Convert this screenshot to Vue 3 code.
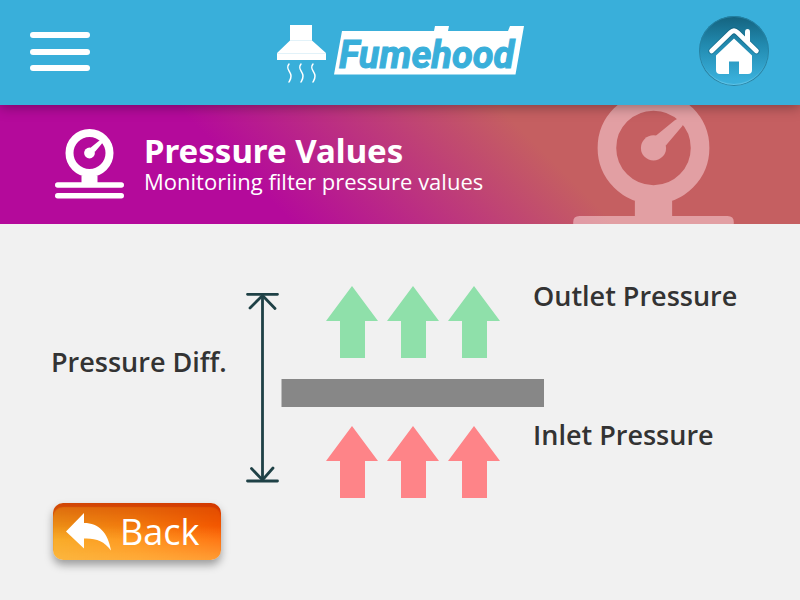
<script setup>
const columns = [107, 168, 229]
const arrow = 'M0 0 L26 35 H13 V72 H-12 V35 H-26 Z'
</script>

<template>
  <div class="app">
    <svg class="defs" width="0" height="0" aria-hidden="true">
      <symbol id="gauge" viewBox="0 0 69 70">
        <circle cx="34.5" cy="24" r="20" fill="none" stroke="currentColor" stroke-width="8" />
        <circle cx="34.5" cy="24" r="5.4" fill="currentColor" />
        <path d="M35.5 18.8 L43.5 12.2 Q45.2 10.9 46.6 12 Q48 13.1 46.8 14.7 L39.8 23 Z" fill="currentColor" />
        <path d="M26.5 46.5 H42.5 V53.3 H66.3 Q69 53.3 69 56 Q69 58.7 66.3 58.7 H2.7 Q0 58.7 0 56 Q0 53.3 2.7 53.3 H26.5 Z" fill="currentColor" />
        <rect y="64" width="69" height="5.4" rx="2.7" fill="currentColor" />
      </symbol>
    </svg>

    <header class="topbar">
      <button class="menu" type="button" aria-label="Menu">
        <span></span><span></span><span></span>
      </button>

      <svg class="logo" viewBox="0 0 248 64" role="img" aria-label="Fumehood">
        <path d="M15 5 H36 V20.5 L50 33 V40 H1 V33 L14 20.5 V5 Z" fill="#fff" />
        <path d="M14 20.5 H36 M1 33.5 H50" stroke="#d5edf7" stroke-width=".7" />
        <g fill="none" stroke="#fff" stroke-width="1.5" stroke-linecap="round">
          <path d="M13 44 C9 49 15 51 15 56 C15 59 14 60 13 62" />
          <path d="M25 44 C21 49 27 51 27 56 C27 59 26 60 25 62" />
          <path d="M37 44 C33 49 39 51 39 56 C39 59 38 60 37 62" />
        </g>
        <path d="M66 11 H158 L159 6 H173 L172 11 H232 L234 6 H248 L239.5 54.5 H58 Z" fill="#fff" />
        <text x="63" y="48" class="wordmark">Fumehood</text>
      </svg>

      <button class="home" type="button" aria-label="Home">
        <svg viewBox="0 0 70 70" aria-hidden="true">
          <path d="M12.5 35 L31.5 16.5 Q35 13 38.5 16.5 L57.5 35" fill="none" stroke="#083f55" stroke-opacity=".3" stroke-width="6.5" stroke-linecap="round" />
          <path d="M46 16 Q46 13 48.5 13 Q51 13 51 16 V27 L46 22 Z" fill="#fff" />
          <path d="M12.5 35 L31.5 16.5 Q35 13 38.5 16.5 L57.5 35" fill="none" stroke="#fff" stroke-width="4.6" stroke-linecap="round" stroke-linejoin="round" />
          <path d="M35 22.5 L53 39.5 V54 Q53 58 49 58 H40 V45.5 H30 V58 H21 Q17 58 17 54 V39.5 Z" fill="#fff" />
        </svg>
      </button>
    </header>

    <section class="banner">
      <svg class="gauge" aria-hidden="true"><use href="#gauge" /></svg>
      <div class="heading">
        <h1>Pressure Values</h1>
        <p>Monitoriing filter pressure values</p>
      </div>
      <svg class="watermark" aria-hidden="true"><use href="#gauge" /></svg>
    </section>

    <main>
      <div class="readings">
        <p class="diff">Pressure Diff.</p>
        <svg class="diagram" viewBox="0 0 288 215" aria-hidden="true">
          <g fill="none" stroke="#1f4146" stroke-width="2.8" stroke-linecap="round">
            <path d="M2.5 9.3 H32.5 M2.5 196 H32.5 M17.5 10 V195" />
            <path d="M5 23 L17.5 10.5 L30 23.5 M6.5 183.5 L17.5 195 L28 183" />
          </g>
          <path v-for="x in columns" :key="'out' + x" :d="arrow" :transform="`translate(${x} 1)`" fill="#8fe0aa" />
          <rect x="36.5" y="94" width="262.5" height="28" fill="#878787" />
          <path v-for="x in columns" :key="'in' + x" :d="arrow" :transform="`translate(${x} 141)`" fill="#fe8488" />
        </svg>
        <div class="sides">
          <p>Outlet Pressure</p>
          <p>Inlet Pressure</p>
        </div>
      </div>

      <button class="back" type="button">
        <svg viewBox="0 0 46 38" aria-hidden="true">
          <path d="M0 18.5 L18 0 V10 C33 10 42 20 45 37.5 C38 28 30 25 18 25.5 V35.5 Z" fill="#fff" />
        </svg>
        Back
      </button>
    </main>
  </div>
</template>

<style>
body {
  background: #f1f1f1;
}
</style>

<style scoped>
.app {
  min-height: 100vh;
  overflow: hidden;
  background: #f1f1f1;
  color: #333;
  font-family: "Open Sans", "Noto Sans", sans-serif;
}

.defs {
  position: absolute;
}

h1,
p {
  margin: 0;
}

button {
  padding: 0;
  border: 0;
  background: none;
  font: inherit;
  cursor: pointer;
}

.topbar {
  position: relative;
  z-index: 1;
  display: grid;
  grid-template-columns: 1fr auto 1fr;
  align-items: center;
  height: 105px;
  padding: 0 31px 2px 30px;
  box-sizing: border-box;
  background: #39afda;
  box-shadow: 0 2px 12px rgba(0, 0, 0, 0.35);
}

.menu {
  display: flex;
  flex-direction: column;
  justify-content: space-between;
  width: 60px;
  height: 39px;
}

.menu span {
  height: 6px;
  border-radius: 3px;
  background: #fff;
}

.logo {
  display: block;
  width: 248px;
  height: 64px;
}

.wordmark {
  fill: #39afda;
  stroke: #39afda;
  stroke-width: 1px;
  font: italic bold 38px "Liberation Sans Narrow", "Roboto", sans-serif;
}

.home {
  justify-self: end;
  width: 70px;
  height: 70px;
  margin-bottom: 1px;
  border-radius: 50%;
  background: linear-gradient(#14627e, #2189ae 40%, #39afda 90%);
  box-shadow: inset 0 0 0 1px #2583a5, inset 0 -2px 1px #61c5e8;
}

.home svg {
  display: block;
}

.banner {
  position: relative;
  display: flex;
  align-items: center;
  gap: 20px;
  height: 119px;
  padding: 0 55px 2px;
  box-sizing: border-box;
  overflow: hidden;
  background: linear-gradient(45deg, #b40a9b 32%, #c55f61 67%);
  color: #fff;
}

.gauge {
  width: 69px;
  height: 70px;
}

.heading h1 {
  font-family: "Noto Sans", sans-serif;
  font-size: 33px;
  font-weight: 700;
  line-height: 34px;
}

.heading p {
  font-size: 22px;
  font-weight: 400;
  line-height: 26px;
}

.watermark {
  position: absolute;
  top: -13px;
  right: 66px;
  width: 161px;
  height: 163px;
  color: #ffdfe4;
  opacity: 0.5;
}

main {
  padding: 61px 51px 40px;
}

.readings {
  display: grid;
  grid-template-columns: 194px 288px 1fr;
  font-size: 27px;
  font-weight: 600;
  line-height: 36px;
  white-space: nowrap;
}

.diff {
  padding-top: 59px;
}

.diagram {
  display: block;
  width: 100%;
  overflow: visible;
}

.sides {
  display: flex;
  flex-direction: column;
  gap: 103px;
  margin-top: -7px;
}

.back {
  display: flex;
  align-items: center;
  gap: 8px;
  height: 57px;
  margin-top: 3px;
  margin-left: 2px;
  padding: 0 22px 0 13px;
  border-radius: 10px;
  background:
    linear-gradient(transparent 40%, rgba(255, 190, 80, 0.65)),
    linear-gradient(rgba(200, 60, 0, 0.6), transparent 65%),
    linear-gradient(90deg, #f6a61c, #ff8a10 50%, #ff5e00);
  box-shadow: inset 0 4px 1px rgba(200, 40, 0, 0.5), 0 5px 8px rgba(0, 0, 0, 0.35);
  color: #fff;
  font-size: 36px;
}

.back svg {
  width: 46px;
  height: 38px;
}
</style>
